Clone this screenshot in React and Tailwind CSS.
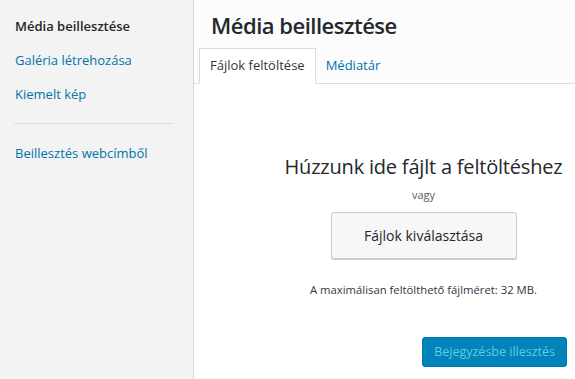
const SideItem = ({ label, active }) => (
  <div
    className={
      "px-[15px] py-[8px] text-[13px] leading-[18px] " +
      (active ? "text-[#23282d] font-semibold" : "text-[#0073aa]")
    }
  >
    {label}
  </div>
);

export default function App() {
  return (
    <div
      className="flex h-[379px] w-[575px] overflow-hidden bg-white"
      style={{ fontFamily: '"Open Sans", "Noto Sans", sans-serif' }}
    >
      {/* sidebar */}
      <div className="w-[194px] shrink-0 bg-[#f3f3f3] border-r border-[#d6d6d6] pt-[9px]">
        <SideItem label="Média beillesztése" active />
        <SideItem label="Galéria létrehozása" />
        <SideItem label="Kiemelt kép" />
        <div className="mx-[14px] my-[12px] h-px bg-[#dcdcdc] w-[159px]" />
        <SideItem label="Beillesztés webcímből" />
      </div>

      {/* main */}
      <div className="flex-1 flex flex-col">
        <div className="bg-[#fcfcfc] border-b border-[#dddddd] h-[84px] flex flex-col">
          <h1 className="text-[22px] font-semibold text-[#23282d] leading-[30px] pl-[17px] pt-[10px] tracking-[-0.5px]">
            Média beillesztése
          </h1>
          <div className="flex mt-auto pl-[5px] -mb-px">
            <div className="h-[36px] px-[10px] flex items-center border border-[#dddddd] border-b-white bg-white text-[13px] text-[#32373c]">
              Fájlok feltöltése
            </div>
            <div className="h-[36px] px-[10px] flex items-center text-[13px] text-[#0073aa]">
              Médiatár
            </div>
          </div>
        </div>

        <div className="flex-1 flex flex-col">
          <div className="flex flex-col items-center pt-[70px] pl-[78px]">
            <div className="text-[20px] text-[#23282d] leading-[26px] tracking-[-0.2px]">
              Húzzunk ide fájlt a feltöltéshez
            </div>
            <div className="text-[11px] text-[#555d66] mt-[8px] leading-[14px]">vagy</div>
            <button className="mt-[10px] w-[186px] h-[47px] bg-[#f7f7f7] border border-[#cccccc] rounded-[3px] shadow-[0_1px_0_#cccccc] text-[14px] text-[#23282d]">
              Fájlok kiválasztása
            </button>
            <div className="mt-[24px] text-[11.3px] text-[#32373c] leading-[14px]">
              A maximálisan feltölthető fájlméret: 32 MB.
            </div>
          </div>
          <div className="mt-auto mb-[12px] self-end mr-[8px]">
            <button className="h-[30px] px-[11px] rounded-[3px] bg-[#0085ba] text-[#66c6e4] text-[12.5px] border border-[#0073aa]">
              Bejegyzésbe illesztés
            </button>
          </div>
        </div>
      </div>
    </div>
  );
}
